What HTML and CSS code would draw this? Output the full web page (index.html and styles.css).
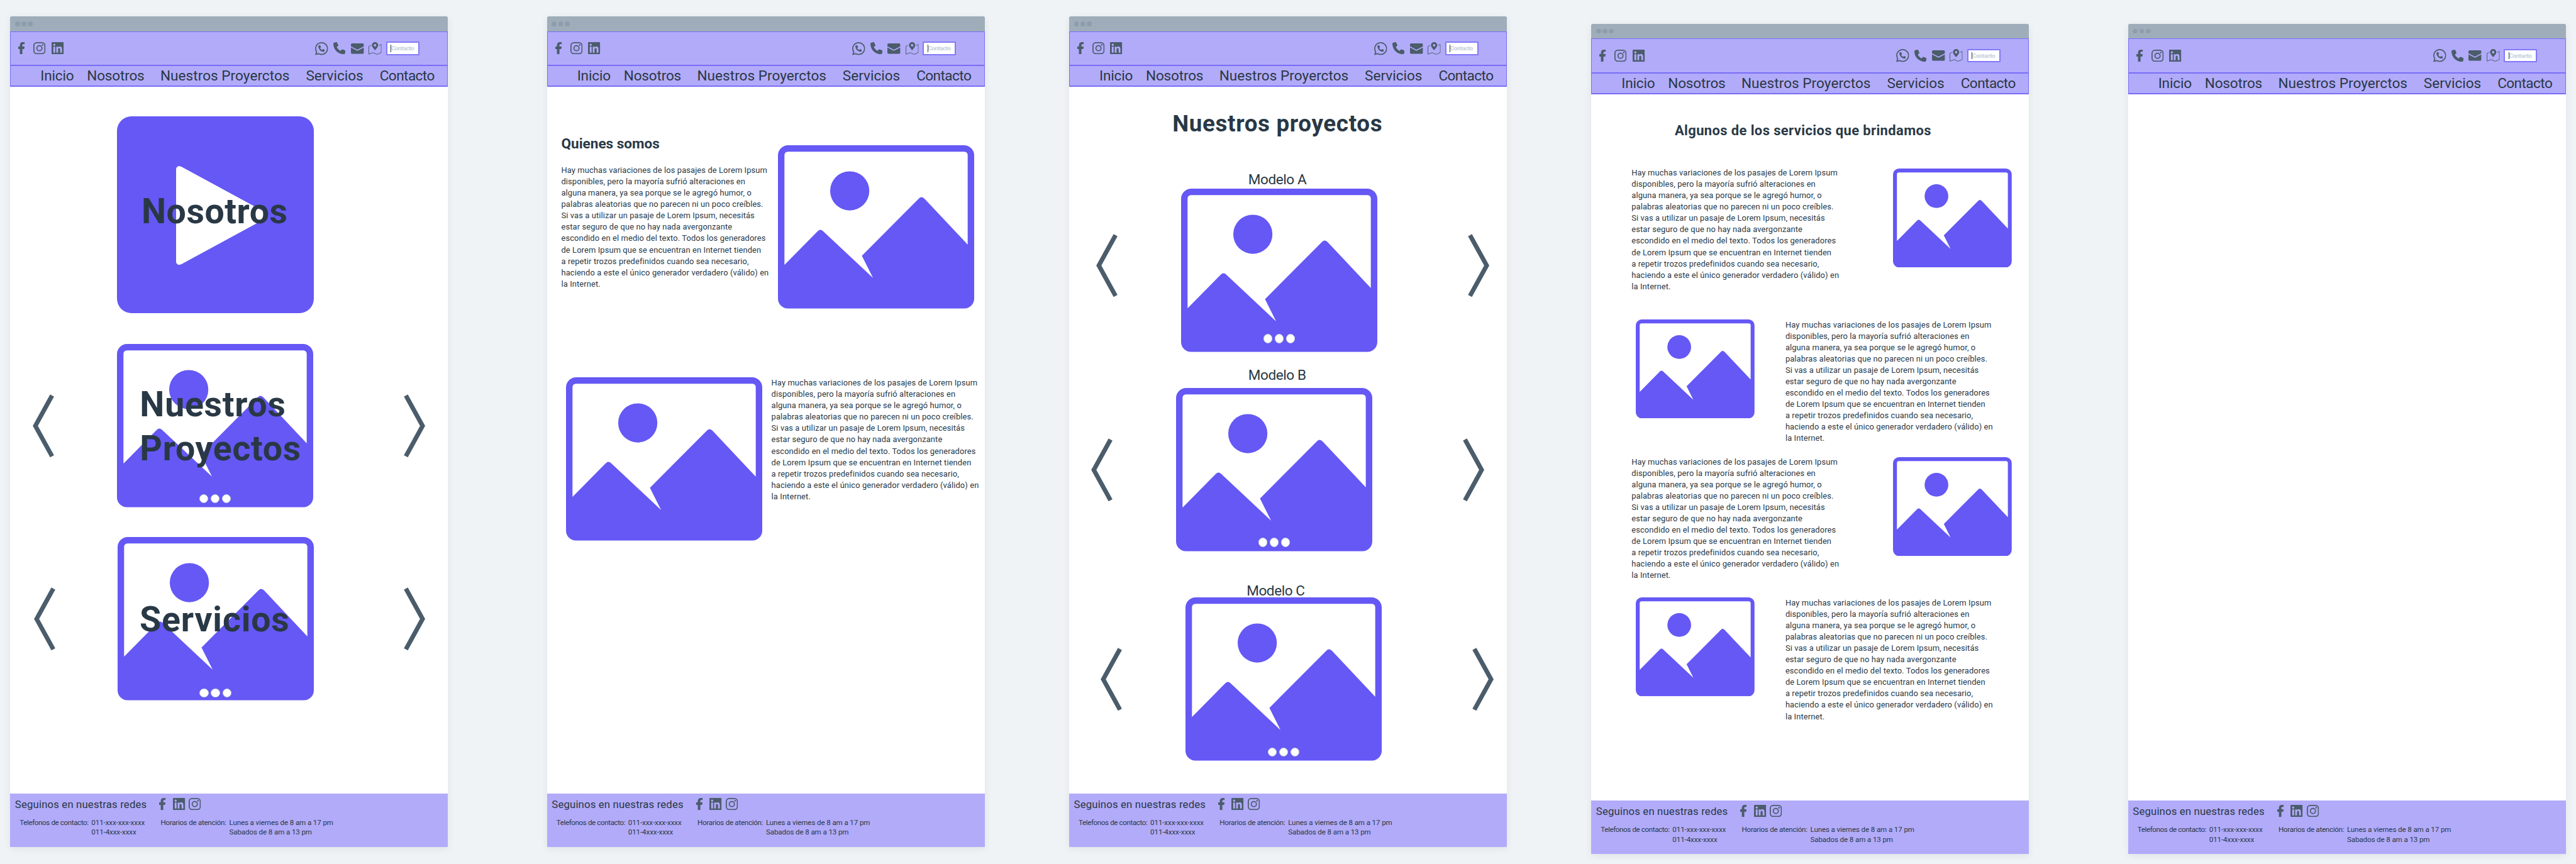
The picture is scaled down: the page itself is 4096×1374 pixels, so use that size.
FILE: index.html
```html
<!DOCTYPE html>
<html lang="es">
<head>
<meta charset="utf-8">
<title>Wireframes</title>
<link rel="stylesheet" href="styles.css">
</head>
<body>
<svg class="defs" aria-hidden="true">
  <symbol id="facebook" viewBox="0 0 16 30"><path d="M4 30V17H0v-6h4V8c0-5 2.500-8 7.500-8H16v5h-2.800C10.500 5 10.200 6 10.200 8v3H16l-1.500 6h-4.300v13z"/></symbol>
  <symbol id="instagram" viewBox="0 0 30 30"><g fill="none" stroke="currentColor" stroke-width="2.700"><rect x="1.350" y="1.350" width="27.300" height="27.300" rx="7.200"/><circle cx="15" cy="15" r="6.300"/></g><circle cx="23" cy="7" r="2"/></symbol>
  <symbol id="linkedin" viewBox="0 0 30 30"><path fill-rule="evenodd" d="M1.500 0h27A1.500 1.500 0 0 1 30 1.500v27a1.500 1.500 0 0 1-1.500 1.500h-27A1.500 1.500 0 0 1 0 28.500v-27A1.500 1.500 0 0 1 1.500 0zM6.700 4a2.600 2.600 0 1 0 0 5.200 2.600 2.600 0 0 0 0-5.200zM4.400 11.300V26h4.500V11.300zM11.700 11.300V26h4.400v-7.300c0-1.900.5-3.800 2.800-3.800s2.400 2.200 2.400 3.900V26h4.400v-8.200c0-3.900-.9-6.900-5.400-6.900-2.300 0-3.700 1.300-4.300 2.400v-2z"/></symbol>
  <symbol id="phone" viewBox="0 0 512 512"><path d="M164.900 24.600c-7.700-18.600-28-28.500-47.400-23.200l-88 24C12.100 30.200 0 46 0 64C0 311.400 200.600 512 448 512c18 0 33.800-12.100 38.600-29.500l24-88c5.300-19.400-4.600-39.700-23.200-47.400l-96-40c-16.300-6.800-35.200-2.100-46.300 11.600L304.700 368C234.300 334.700 177.300 277.700 144 207.300L193.300 167c13.700-11.200 18.400-30 11.600-46.300l-40-96z"/></symbol>
  <symbol id="whatsapp" viewBox="0 0 448 448"><path transform="translate(0 -32)" d="M380.900 97.100C339 55.100 283.200 32 223.900 32c-122.400 0-222 99.600-222 222 0 39.100 10.200 77.300 29.600 111L0 480l117.700-30.900c32.400 17.700 68.900 27 106.100 27h.1c122.300 0 224.100-99.600 224.100-222 0-59.300-25.200-115-67.100-157zm-157 341.600c-33.200 0-65.700-8.900-94-25.700l-6.700-4-69.800 18.300L72 359.200l-4.400-7c-18.500-29.400-28.200-63.300-28.200-98.200 0-101.700 82.800-184.500 184.600-184.500 49.300 0 95.600 19.200 130.400 54.100 34.800 34.900 56.200 81.200 56.100 130.500 0 101.800-84.900 184.600-186.600 184.600z"/><use href="#phone" x="110" y="110" width="222" height="222"/></symbol>
  <symbol id="mail" viewBox="0 0 32 26"><path d="M3 0h26a3 3 0 0 1 3 3v4.500l-15 7.700q-1 .5-2 0L0 7.500V3a3 3 0 0 1 3-3zM0 10l15 7.700q1 .5 2 0L32 10v13a3 3 0 0 1-3 3H3a3 3 0 0 1-3-3z"/></symbol>
  <symbol id="map" viewBox="0 0 32 31"><path fill-rule="evenodd" d="M16 20C13 16 8.200 12 8.200 7.800a7.800 7.800 0 0 1 15.600 0C23.800 12 19 16 16 20zM16 4.800a3.100 3.100 0 1 0 0 6.200 3.100 3.100 0 0 0 0-6.200z"/><path fill="none" stroke="currentColor" stroke-width="1.500" d="M6 8.200L.8 10.500V29.900L11 26l10 4.200 10.300-4.500V5.800L26 8.200"/></symbol>
  <symbol id="chevron" viewBox="0 0 53 156"><path fill="none" stroke="currentColor" stroke-width="11" d="M47.800 3L6.500 78l41.300 75"/></symbol>
  <symbol id="picture" viewBox="0 0 484 403"><path fill-rule="evenodd" d="M25 0H459a25 25 0 0 1 25 25V378a25 25 0 0 1-25 25H25a25 25 0 0 1-25-25V25A25 25 0 0 1 25 0zM24 16a8 8 0 0 0-8 8V295L97.500 212.500Q104.500 205.400 111.500 212L234.500 327.500 207 272.500 347.500 131.500Q354.500 124.500 361.500 132L468 245V24a8 8 0 0 0-8-8z"/><circle cx="177" cy="112.500" r="48.300"/></symbol>
  <symbol id="play" viewBox="0 0 226 244"><path d="M0 8.500C0 1 7 -2 13.500 2L220 114Q232 122 220 130L13.500 242C7 246 0 243 0 235.500z"/></symbol>
</svg>

<main class="board">

  <!-- Inicio -->
  <section class="page page-1">
    <div class="chrome"><i></i><i></i><i></i></div>
    <header class="top"><svg class="f"><use href="#facebook"/></svg><svg class="sq"><use href="#instagram"/></svg><svg class="sq"><use href="#linkedin"/></svg><svg class="wa"><use href="#whatsapp"/></svg><svg class="ph"><use href="#phone"/></svg><svg class="ml"><use href="#mail"/></svg><svg class="mp"><use href="#map"/></svg><div class="field"><span>Contacto</span></div></header>
    <nav class="nav"><a>Inicio</a><a>Nosotros</a><a class="wide">Nuestros Proyerctos</a><a>Servicios</a><a class="end">Contacto</a></nav>
    <div class="body">
      <div class="video"><svg><use href="#play"/></svg><h2 class="caption">Nosotros</h2></div>
      <div class="slider home-projects"><svg class="arrow"><use href="#chevron"/></svg><div class="card"><svg><use href="#picture"/></svg><h2 class="caption">Nuestros<br>Proyectos</h2><div class="dots"><i></i><i></i><i></i></div></div><svg class="arrow next"><use href="#chevron"/></svg></div>
      <div class="slider home-services"><svg class="arrow"><use href="#chevron"/></svg><div class="card"><svg><use href="#picture"/></svg><h2 class="caption">Servicios</h2><div class="dots"><i></i><i></i><i></i></div></div><svg class="arrow next"><use href="#chevron"/></svg></div>
    </div>
    <footer class="foot"><div class="social"><span>Seguinos en nuestras redes</span><svg class="f"><use href="#facebook"/></svg><svg class="sq"><use href="#linkedin"/></svg><svg class="sq"><use href="#instagram"/></svg></div><div class="info"><span>Telefonos de contacto:</span><span>011-xxx-xxx-xxxx<br>011-4xxx-xxxx</span><span>Horarios de atención:</span><span>Lunes a viernes de 8 am a 17 pm<br>Sabados de 8 am a 13 pm</span></div></footer>
  </section>

  <!-- Nosotros -->
  <section class="page page-2">
    <div class="chrome"><i></i><i></i><i></i></div>
    <header class="top"><svg class="f"><use href="#facebook"/></svg><svg class="sq"><use href="#instagram"/></svg><svg class="sq"><use href="#linkedin"/></svg><svg class="wa"><use href="#whatsapp"/></svg><svg class="ph"><use href="#phone"/></svg><svg class="ml"><use href="#mail"/></svg><svg class="mp"><use href="#map"/></svg><div class="field"><span>Contacto</span></div></header>
    <nav class="nav"><a>Inicio</a><a>Nosotros</a><a class="wide">Nuestros Proyerctos</a><a>Servicios</a><a class="end">Contacto</a></nav>
    <div class="body">
      <div class="about">
        <div class="about-text"><h2>Quienes somos</h2>
          <p class="copy">Hay muchas variaciones de los pasajes de Lorem Ipsum<br>disponibles, pero la mayoría sufrió alteraciones en<br>alguna manera, ya sea porque se le agregó humor, o<br>palabras aleatorias que no parecen ni un poco creíbles.<br>Si vas a utilizar un pasaje de Lorem Ipsum, necesitás<br>estar seguro de que no hay nada avergonzante<br>escondido en el medio del texto. Todos los generadores<br>de Lorem Ipsum que se encuentran en Internet tienden<br>a repetir trozos predefinidos cuando sea necesario,<br>haciendo a este el único generador verdadero (válido) en<br>la Internet.</p></div>
        <div class="card"><svg><use href="#picture"/></svg></div>
      </div>
      <div class="about second">
        <div class="card"><svg><use href="#picture"/></svg></div>
        <p class="copy">Hay muchas variaciones de los pasajes de Lorem Ipsum<br>disponibles, pero la mayoría sufrió alteraciones en<br>alguna manera, ya sea porque se le agregó humor, o<br>palabras aleatorias que no parecen ni un poco creíbles.<br>Si vas a utilizar un pasaje de Lorem Ipsum, necesitás<br>estar seguro de que no hay nada avergonzante<br>escondido en el medio del texto. Todos los generadores<br>de Lorem Ipsum que se encuentran en Internet tienden<br>a repetir trozos predefinidos cuando sea necesario,<br>haciendo a este el único generador verdadero (válido) en<br>la Internet.</p>
      </div>
    </div>
    <footer class="foot"><div class="social"><span>Seguinos en nuestras redes</span><svg class="f"><use href="#facebook"/></svg><svg class="sq"><use href="#linkedin"/></svg><svg class="sq"><use href="#instagram"/></svg></div><div class="info"><span>Telefonos de contacto:</span><span>011-xxx-xxx-xxxx<br>011-4xxx-xxxx</span><span>Horarios de atención:</span><span>Lunes a viernes de 8 am a 17 pm<br>Sabados de 8 am a 13 pm</span></div></footer>
  </section>

  <!-- Nuestros proyectos -->
  <section class="page page-3">
    <div class="chrome"><i></i><i></i><i></i></div>
    <header class="top"><svg class="f"><use href="#facebook"/></svg><svg class="sq"><use href="#instagram"/></svg><svg class="sq"><use href="#linkedin"/></svg><svg class="wa"><use href="#whatsapp"/></svg><svg class="ph"><use href="#phone"/></svg><svg class="ml"><use href="#mail"/></svg><svg class="mp"><use href="#map"/></svg><div class="field"><span>Contacto</span></div></header>
    <nav class="nav"><a>Inicio</a><a>Nosotros</a><a class="wide">Nuestros Proyerctos</a><a>Servicios</a><a class="end">Contacto</a></nav>
    <div class="body">
      <h1>Nuestros proyectos</h1>
      <h3 class="label-a">Modelo A</h3>
      <div class="slider model-a"><svg class="arrow"><use href="#chevron"/></svg><div class="card"><svg><use href="#picture"/></svg><div class="dots"><i></i><i></i><i></i></div></div><svg class="arrow next"><use href="#chevron"/></svg></div>
      <h3 class="label-b">Modelo B</h3>
      <div class="slider model-b"><svg class="arrow"><use href="#chevron"/></svg><div class="card"><svg><use href="#picture"/></svg><div class="dots"><i></i><i></i><i></i></div></div><svg class="arrow next"><use href="#chevron"/></svg></div>
      <h3 class="label-c">Modelo C</h3>
      <div class="slider model-c"><svg class="arrow"><use href="#chevron"/></svg><div class="card"><svg><use href="#picture"/></svg><div class="dots"><i></i><i></i><i></i></div></div><svg class="arrow next"><use href="#chevron"/></svg></div>
    </div>
    <footer class="foot"><div class="social"><span>Seguinos en nuestras redes</span><svg class="f"><use href="#facebook"/></svg><svg class="sq"><use href="#linkedin"/></svg><svg class="sq"><use href="#instagram"/></svg></div><div class="info"><span>Telefonos de contacto:</span><span>011-xxx-xxx-xxxx<br>011-4xxx-xxxx</span><span>Horarios de atención:</span><span>Lunes a viernes de 8 am a 17 pm<br>Sabados de 8 am a 13 pm</span></div></footer>
  </section>

  <!-- Servicios -->
  <section class="page page-4">
    <div class="chrome"><i></i><i></i><i></i></div>
    <header class="top"><svg class="f"><use href="#facebook"/></svg><svg class="sq"><use href="#instagram"/></svg><svg class="sq"><use href="#linkedin"/></svg><svg class="wa"><use href="#whatsapp"/></svg><svg class="ph"><use href="#phone"/></svg><svg class="ml"><use href="#mail"/></svg><svg class="mp"><use href="#map"/></svg><div class="field"><span>Contacto</span></div></header>
    <nav class="nav"><a>Inicio</a><a>Nosotros</a><a class="wide">Nuestros Proyerctos</a><a>Servicios</a><a class="end">Contacto</a></nav>
    <div class="body">
      <h2>Algunos de los servicios que brindamos</h2>
      <div class="service one">
        <p class="copy">Hay muchas variaciones de los pasajes de Lorem Ipsum<br>disponibles, pero la mayoría sufrió alteraciones en<br>alguna manera, ya sea porque se le agregó humor, o<br>palabras aleatorias que no parecen ni un poco creíbles.<br>Si vas a utilizar un pasaje de Lorem Ipsum, necesitás<br>estar seguro de que no hay nada avergonzante<br>escondido en el medio del texto. Todos los generadores<br>de Lorem Ipsum que se encuentran en Internet tienden<br>a repetir trozos predefinidos cuando sea necesario,<br>haciendo a este el único generador verdadero (válido) en<br>la Internet.</p>
        <div class="card small"><svg><use href="#picture"/></svg></div>
      </div>
      <div class="service two">
        <div class="card small"><svg><use href="#picture"/></svg></div>
        <p class="copy">Hay muchas variaciones de los pasajes de Lorem Ipsum<br>disponibles, pero la mayoría sufrió alteraciones en<br>alguna manera, ya sea porque se le agregó humor, o<br>palabras aleatorias que no parecen ni un poco creíbles.<br>Si vas a utilizar un pasaje de Lorem Ipsum, necesitás<br>estar seguro de que no hay nada avergonzante<br>escondido en el medio del texto. Todos los generadores<br>de Lorem Ipsum que se encuentran en Internet tienden<br>a repetir trozos predefinidos cuando sea necesario,<br>haciendo a este el único generador verdadero (válido) en<br>la Internet.</p>
      </div>
      <div class="service three">
        <p class="copy">Hay muchas variaciones de los pasajes de Lorem Ipsum<br>disponibles, pero la mayoría sufrió alteraciones en<br>alguna manera, ya sea porque se le agregó humor, o<br>palabras aleatorias que no parecen ni un poco creíbles.<br>Si vas a utilizar un pasaje de Lorem Ipsum, necesitás<br>estar seguro de que no hay nada avergonzante<br>escondido en el medio del texto. Todos los generadores<br>de Lorem Ipsum que se encuentran en Internet tienden<br>a repetir trozos predefinidos cuando sea necesario,<br>haciendo a este el único generador verdadero (válido) en<br>la Internet.</p>
        <div class="card small"><svg><use href="#picture"/></svg></div>
      </div>
      <div class="service four">
        <div class="card small"><svg><use href="#picture"/></svg></div>
        <p class="copy">Hay muchas variaciones de los pasajes de Lorem Ipsum<br>disponibles, pero la mayoría sufrió alteraciones en<br>alguna manera, ya sea porque se le agregó humor, o<br>palabras aleatorias que no parecen ni un poco creíbles.<br>Si vas a utilizar un pasaje de Lorem Ipsum, necesitás<br>estar seguro de que no hay nada avergonzante<br>escondido en el medio del texto. Todos los generadores<br>de Lorem Ipsum que se encuentran en Internet tienden<br>a repetir trozos predefinidos cuando sea necesario,<br>haciendo a este el único generador verdadero (válido) en<br>la Internet.</p>
      </div>
    </div>
    <footer class="foot"><div class="social"><span>Seguinos en nuestras redes</span><svg class="f"><use href="#facebook"/></svg><svg class="sq"><use href="#linkedin"/></svg><svg class="sq"><use href="#instagram"/></svg></div><div class="info"><span>Telefonos de contacto:</span><span>011-xxx-xxx-xxxx<br>011-4xxx-xxxx</span><span>Horarios de atención:</span><span>Lunes a viernes de 8 am a 17 pm<br>Sabados de 8 am a 13 pm</span></div></footer>
  </section>

  <!-- Contacto -->
  <section class="page page-5">
    <div class="chrome"><i></i><i></i><i></i></div>
    <header class="top"><svg class="f"><use href="#facebook"/></svg><svg class="sq"><use href="#instagram"/></svg><svg class="sq"><use href="#linkedin"/></svg><svg class="wa"><use href="#whatsapp"/></svg><svg class="ph"><use href="#phone"/></svg><svg class="ml"><use href="#mail"/></svg><svg class="mp"><use href="#map"/></svg><div class="field"><span>Contacto</span></div></header>
    <nav class="nav"><a>Inicio</a><a>Nosotros</a><a class="wide">Nuestros Proyerctos</a><a>Servicios</a><a class="end">Contacto</a></nav>
    <div class="body"></div>
    <footer class="foot"><div class="social"><span>Seguinos en nuestras redes</span><svg class="f"><use href="#facebook"/></svg><svg class="sq"><use href="#linkedin"/></svg><svg class="sq"><use href="#instagram"/></svg></div><div class="info"><span>Telefonos de contacto:</span><span>011-xxx-xxx-xxxx<br>011-4xxx-xxxx</span><span>Horarios de atención:</span><span>Lunes a viernes de 8 am a 17 pm<br>Sabados de 8 am a 13 pm</span></div></footer>
  </section>

</main>
</body>
</html>
```
FILE: styles.css
```css
/* 1rem = 10 design pixels */
html { font-size: 6.4463px; }
* { box-sizing: border-box; margin: 0; padding: 0; }
body {
  width: 4096px;
  height: 1374px;
  overflow: hidden;
  background: #eff3f6;
  color: #293845;
  font-family: Roboto, "Liberation Sans", sans-serif;
}
svg { display: block; fill: currentColor; flex: none; overflow: visible; }
.defs { position: absolute; width: 0; height: 0; }

.board { display: flex; align-items: flex-start; padding: 4.1rem 0 0 2.5rem; }
.page {
  display: flex;
  flex-direction: column;
  flex: none;
  width: 108rem;
  height: 204.8rem;
  background: #fff;
  border-radius: .4rem .4rem 0 0;
  box-shadow: 0 .4rem 1.6rem rgba(40, 56, 70, .08);
}
.page-2, .page-5 { margin-left: 24.4rem; }
.page-3, .page-4 { margin-left: 20.8rem; }
.page-4, .page-5 { margin-top: 1.8rem; }
.body { flex: 1; min-height: 0; }

/* window bar */
.chrome {
  display: flex;
  align-items: center;
  gap: .4rem;
  height: 3.6rem;
  padding-left: 1.2rem;
  background: #9eadb9;
  border-radius: .4rem .4rem 0 0;
}
.chrome i { width: 1.2rem; height: 1.2rem; border-radius: 50%; background: #8e9dac; }

/* site header */
.top {
  display: flex;
  align-items: center;
  height: 8.3rem;
  padding-left: 1.9rem;
  background: #b2abfa;
  border: 1px solid rgba(101, 88, 245, .75);
  border-bottom: 0;
  color: #4b5c6b;
}
.f { width: 1.6rem; height: 3rem; }
.sq { width: 3rem; height: 3rem; }
.top .f { margin-right: 2.1rem; }
.top .sq { margin-right: 1.4rem; }
.top .wa { width: 3.2rem; height: 3.2rem; margin-left: 60.7rem; }
.top .ph { width: 3rem; height: 3rem; margin-left: 1.3rem; }
.top .ml { width: 3.2rem; height: 2.6rem; margin-left: 1.3rem; }
.top .mp { width: 3.2rem; height: 3.1rem; margin-left: 1.2rem; }
.field {
  display: flex;
  align-items: center;
  width: 8.2rem;
  height: 3.4rem;
  margin-left: 1.1rem;
  padding-left: .8rem;
  background: #fff;
  border: 2px solid #8379f7;
  border-radius: .2rem;
  color: #c3d0dc;
  font-size: 1.5rem;
  font-weight: 700;
  letter-spacing: -.041em;
}
.field span { border-left: 1px solid #293845; line-height: 1.8rem; }
.nav {
  display: flex;
  height: 5.4rem;
  padding: .8rem 0 0 7.3rem;
  background: #b2abfa;
  border: solid rgba(101, 88, 245, .75);
  border-width: 2px 1px;
  font-size: 3.5rem;
  line-height: 3.3rem;
  white-space: nowrap;
}
.nav a { flex: none; }
.nav a:nth-child(1) { width: 11.5rem; letter-spacing: -.006em; }
.nav a:nth-child(2) { width: 18.1rem; letter-spacing: -.008em; }
.nav a:nth-child(3) { width: 35.9rem; letter-spacing: .002em; }
.nav a:nth-child(4) { width: 18.2rem; }
.nav a:nth-child(5) { letter-spacing: -.024em; }

/* site footer */
.foot { height: 13.2rem; padding: 1.1rem 0 0 1.2rem; background: #b2abfa; }
.social { display: flex; height: 3rem; color: #4b5c6b; }
.social span {
  width: 35.6rem;
  color: #293845;
  font-size: 2.6rem;
  line-height: 3.1rem;
  letter-spacing: .009em;
  white-space: nowrap;
}
.social .f { margin-right: 1.7rem; }
.social .sq { margin-right: 1rem; }
.info {
  display: grid;
  grid-template-columns: 17.7rem 17.1rem 16.9rem auto;
  padding: 1.95rem 0 0 1.15rem;
  font-size: 1.8rem;
  line-height: 2.43rem;
  letter-spacing: -.01em;
  white-space: nowrap;
}
.info span:first-child { letter-spacing: -.033em; }
.info span:nth-child(3) { letter-spacing: -.024em; }

/* pictures and sliders */
.card { position: relative; flex: none; width: 48.4rem; height: 40.3rem; color: #6558f5; }
.card > svg { width: 100%; height: 100%; }
.card.small { width: 29.3rem; height: 24.4rem; }
.dots {
  position: absolute;
  left: 0;
  right: 0;
  top: 37rem;
  display: flex;
  justify-content: center;
  gap: .6rem;
}
.dots i { width: 2.2rem; height: 2.2rem; border-radius: 50%; background: #fff; border: 1px solid #c9d1dc; }
.slider { display: flex; align-items: center; }
.slider .card { margin: 0 22.3rem 0 15.6rem; }
.arrow { width: 5.3rem; height: 15.6rem; color: #4b5c6b; }
.next { transform: scaleX(-1); }
.caption {
  position: absolute;
  color: #293845;
  font-size: 8.6rem;
  font-weight: 700;
  line-height: 10.9rem;
  letter-spacing: .013em;
  white-space: nowrap;
}

/* Inicio */
.video {
  position: relative;
  width: 48.6rem;
  height: 48.6rem;
  margin: 7.3rem 0 0 26.3rem;
  padding: 12.2rem 0 0 14.7rem;
  background: #6558f5;
  border-radius: 3.6rem;
  color: #fff;
}
.video svg { width: 22.6rem; height: 24.4rem; }
.video .caption { left: 6.1rem; top: 18.15rem; letter-spacing: .01em; }
.home-projects { margin: 7.6rem 0 0 5.5rem; }
.home-projects .caption { left: 5.6rem; top: 9.6rem; }
.home-projects .dots { top: 37rem; }
.home-services { margin: 7.3rem 0 0 5.95rem; }
.home-services .card { margin: 0 22.3rem 0 15.2rem; }
.home-services .caption { left: 5.5rem; top: 15.1rem; letter-spacing: .0155em; }
.home-services .dots { top: 37.4rem; }

/* text */
.copy { flex: none; font-size: 2rem; line-height: 2.8rem; letter-spacing: .0095em; white-space: nowrap; }
h1, h2, h3 { white-space: nowrap; }

/* Nosotros */
.about { display: flex; align-items: flex-start; margin: 12.1rem 0 0 3.55rem; }
.about-text { width: 53.45rem; }
.about h2 { font-size: 3.5rem; line-height: 4rem; margin-bottom: 3.18rem; }
.about .card { margin-top: 2.32rem; }
.about.second { margin: 16.9rem 0 0 4.73rem; }
.about.second .card { margin: 0 2.25rem 0 0; }
.second .copy { margin-top: .1rem; }

/* Nuestros proyectos */
h1 { font-size: 5.7rem; line-height: 6rem; letter-spacing: .018em; margin: 6.25rem 0 0 25.5rem; }
h3 { font-size: 3.5rem; font-weight: 400; line-height: 3rem; letter-spacing: -.019em; margin-left: 44.2rem; }
.label-a { margin-top: 9.15rem; }
.label-b { margin-top: 4.2rem; }
.label-c { margin-top: 8.3rem; margin-left: 43.8rem; }
.model-a { margin: .75rem 0 0 6.77rem; }
.model-a .arrow { margin-bottom: 2.34rem; }
.model-a .dots { top: 35.9rem; }
.model-b { margin: 1.66rem 0 0 5.53rem; }
.model-c { margin: .08rem 0 0 7.85rem; }

/* Servicios */
.page-4 h2 { font-size: 3.4rem; line-height: 4rem; letter-spacing: .0187em; margin: 7.08rem 0 0 20.6rem; }
.service { display: flex; align-items: flex-start; height: 30.8rem; }
.one { margin: 7.02rem 0 0 9.95rem; }
.two { margin: 6.66rem 0 0 11rem; }
.three { margin: 3.06rem 0 0 9.95rem; }
.four { margin: 3.98rem 0 0 11rem; }
.one .copy, .three .copy { width: 64.55rem; }
.one .card, .three .card { margin-top: .23rem; }
.two .card, .four .card { margin-right: 7.6rem; }
```
